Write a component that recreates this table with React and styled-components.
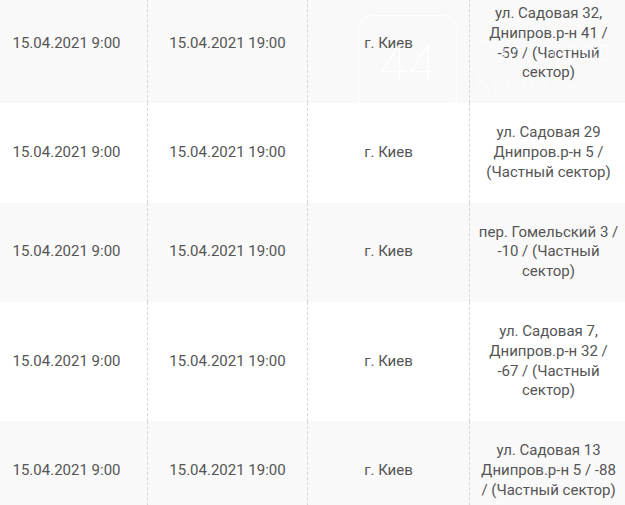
import React from "react";
import styled, { createGlobalStyle } from "styled-components";

const Global = createGlobalStyle`
  html, body { margin: 0; padding: 0; background: #ffffff; overflow: hidden; }
  body { font-family: Roboto, "Noto Sans", Arial, sans-serif; }
`;

const Page = styled.div`
  position: relative;
  width: 625px;
  height: 505px;
  overflow: hidden;
`;

const Table = styled.div`
  display: grid;
  grid-template-columns: 161px 160px 162px 158px;
  margin-top: -16px;
  margin-left: -14px;
`;

const Cell = styled.div`
  display: flex;
  align-items: center;
  justify-content: center;
  text-align: center;
  padding: 20px 8px;
  font-size: 15px;
  line-height: 19.8px;
  color: #555555;
  background: ${(p) => (p.$shade ? "#f9f9f9" : "#ffffff")};
  border-left: ${(p) => (p.$first ? "none" : "1px dashed #d6d6d6")};
`;

const Watermark = styled.div`
  position: absolute;
  left: 358px;
  top: 15px;
  display: flex;
  align-items: flex-start;
  gap: 18px;
  pointer-events: none;
  color: rgba(255, 255, 255, 0.9);
`;

const Badge = styled.div`
  width: 97px;
  height: 97px;
  border: 1px solid rgba(255, 255, 255, 0.9);
  border-radius: 14px;
  display: flex;
  align-items: center;
  justify-content: center;
  font-family: Roboto, sans-serif;
  font-weight: 100;
  font-size: 52px;
  line-height: 1;
`;

const Caption = styled.div`
  padding-top: 20px;
  font-family: Roboto, sans-serif;
  font-weight: 100;
  font-size: 27px;
  line-height: 32px;
  white-space: nowrap;
`;

const rows = [
  "ул. Садовая 32, Днипров.р-н 41 / -59 / (Частный сектор)",
  "ул. Садовая 29 Днипров.р-н 5 / (Частный сектор)",
  "пер. Гомельский 3 / -10 / (Частный сектор)",
  "ул. Садовая 7, Днипров.р-н 32 / -67 / (Частный сектор)",
  "ул. Садовая 13 Днипров.р-н 5 / -88 / (Частный сектор)",
];

export default function App() {
  return (
    <Page>
      <Global />
      <Table>
        {rows.map((addr, i) => {
          const shade = i % 2 === 0;
          return (
            <React.Fragment key={i}>
              <Cell $shade={shade} $first>15.04.2021 9:00</Cell>
              <Cell $shade={shade}>15.04.2021 19:00</Cell>
              <Cell $shade={shade}>г. Киев</Cell>
              <Cell $shade={shade}>{addr}</Cell>
            </React.Fragment>
          );
        })}
      </Table>
      <Watermark>
        <Badge>44</Badge>
        <Caption>
          Сайт города
          <br />
          Киева
        </Caption>
      </Watermark>
    </Page>
  );
}
